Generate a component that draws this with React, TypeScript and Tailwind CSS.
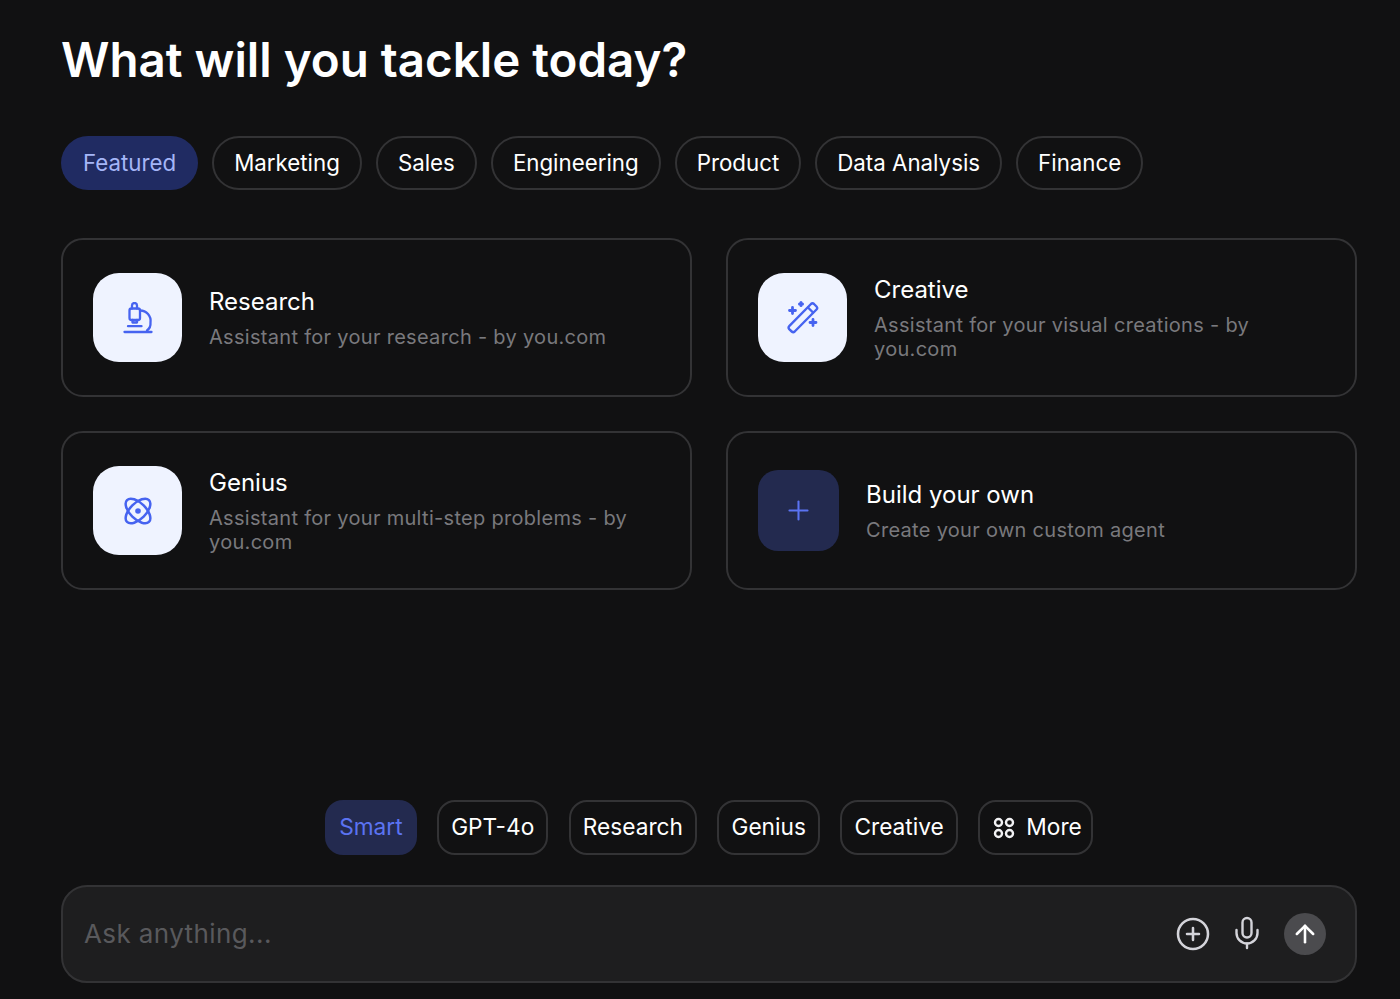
import { ArrowUp, CirclePlus, Mic, Plus } from 'lucide-react'
import type { ReactNode } from 'react'

const categories = ['Marketing', 'Sales', 'Engineering', 'Product', 'Data Analysis', 'Finance']
const models = ['GPT-4o', 'Research', 'Genius', 'Creative']

function MicroscopeIcon() {
  return (
    <svg width="30" height="32" viewBox="0 0 30 32" fill="none" stroke="#4663f0" strokeWidth="2.300" strokeLinecap="round" strokeLinejoin="round">
      <rect x="6.500" y="6.500" width="10.500" height="11.500" rx="2" />
      <path d="M9 6.500V3.500a2.400 2.400 0 0 1 5 0v3" />
      <path d="M9.500 18v2.500h4.500V18" />
      <path d="M17 8.500a10.500 10.500 0 0 1 10.500 12 9 9 0 0 1-3.500 8" />
      <path d="M5 24.200h13.500" />
      <path d="M1.500 30h27" />
    </svg>
  )
}

function WandIcon() {
  return (
    <svg width="34" height="34" viewBox="0 1.500 34 34" fill="none" stroke="#4663f0" strokeWidth="2.400" strokeLinecap="round" strokeLinejoin="round">
      <path d="M3.200 26.700 25 4.500a2.200 2.200 0 0 1 3 0l2.500 2.500a2.200 2.200 0 0 1 0 3L8.700 32a2.200 2.200 0 0 1-3 0l-2.500-2.400a2.200 2.200 0 0 1 0-2.900Z" />
      <path d="m22 8 5 5" />
      <path d="M6.500 8v6M3.500 11h6" strokeWidth="2.800" />
      <path d="M15 3v3M13.500 4.500h3" strokeWidth="3" />
      <path d="M27 20v6M24 23h6" strokeWidth="2.800" />
    </svg>
  )
}

function AtomIcon() {
  return (
    <svg width="30" height="30" viewBox="0 0 30 30" fill="none" stroke="#4663f0" strokeWidth="2.500">
      <ellipse cx="15" cy="15" rx="8" ry="15.500" transform="rotate(45 15 15)" />
      <ellipse cx="15" cy="15" rx="8" ry="15.500" transform="rotate(-45 15 15)" />
      <circle cx="15" cy="15" r="2.800" fill="#4663f0" stroke="none" />
    </svg>
  )
}

function GridDotsIcon() {
  return (
    <svg width="22" height="22" viewBox="0 0 22 22" fill="none" stroke="#f2f2f4" strokeWidth="2.400">
      <circle cx="5.500" cy="5.500" r="3.500" />
      <circle cx="16.500" cy="5.500" r="3.500" />
      <circle cx="5.500" cy="16.500" r="3.500" />
      <circle cx="16.500" cy="16.500" r="3.500" />
    </svg>
  )
}

function AgentCard({ icon, title, description }: { icon: ReactNode; title: string; description: string }) {
  return (
    <div className="flex h-[159px] items-center gap-[27px] rounded-[22px] border-2 border-[#333335] px-[30px]">
      <div className="flex h-[89px] w-[89px] shrink-0 items-center justify-center rounded-[26px] bg-[#eff3ff]">{icon}</div>
      <div className="min-w-0">
        <div className="text-[24px] leading-[30px] text-white">{title}</div>
        <div className="mt-[8px] text-[20px] leading-[24px] tracking-[0.3px] text-[#79797d]">{description}</div>
      </div>
    </div>
  )
}

export default function App() {
  return (
    <div className="flex h-[999px] w-[1400px] flex-col overflow-hidden bg-[#111112] pl-[61px] pr-[43px] font-['Inter',sans-serif]">
      <h1 className="mt-[30px] text-[47.500px] font-semibold leading-[60px] text-white">What will you tackle today?</h1>

      <div className="mt-[46px] flex gap-[14px]">
        <button className="h-[54px] rounded-full bg-[#202b62] px-[22px] text-[22.300px] text-[#a5b6f7]">Featured</button>
        {categories.map((name) => (
          <button key={name} className="h-[54px] rounded-full border-2 border-[#333335] px-[20px] text-[22.300px] text-white">
            {name}
          </button>
        ))}
      </div>

      <div className="mt-[48px] grid grid-cols-2 gap-x-[34px] gap-y-[34px]">
        <AgentCard icon={<MicroscopeIcon />} title="Research" description="Assistant for your research - by you.com" />
        <AgentCard icon={<WandIcon />} title="Creative" description="Assistant for your visual creations - by you.com" />
        <AgentCard icon={<AtomIcon />} title="Genius" description="Assistant for your multi-step problems - by you.com" />
        <div className="flex h-[159px] items-center gap-[27px] rounded-[22px] border-2 border-[#333335] px-[30px]">
          <div className="flex h-[81px] w-[81px] shrink-0 items-center justify-center rounded-[20px] bg-[#232a4f]">
            <Plus size={31} strokeWidth={1.600} color="#5b73f2" />
          </div>
          <div>
            <div className="text-[24px] leading-[30px] text-white">Build your own</div>
            <div className="mt-[8px] text-[20px] leading-[24px] tracking-[0.3px] text-[#79797d]">Create your own custom agent</div>
          </div>
        </div>
      </div>

      <div className="mt-[210px] flex justify-center gap-[20.500px]">
        <button className="h-[55px] rounded-[18px] bg-[#232a4f] px-[14px] text-[22.700px] text-[#5b73f2]">Smart</button>
        {models.map((name) => (
          <button key={name} className="h-[55px] rounded-[18px] border-2 border-[#333335] px-[12px] text-[22.700px] text-white">
            {name}
          </button>
        ))}
        <button className="flex h-[55px] items-center gap-[11px] rounded-[18px] border-2 border-[#333335] pl-[13px] pr-[9px] text-[22.700px] text-white">
          <GridDotsIcon />
          More
        </button>
      </div>

      <div className="mt-[30px] flex h-[98px] items-center rounded-[26px] border-2 border-[#333335] bg-[#1e1e1f] pl-[21px] pr-[29px]">
        <span className="flex-1 pb-[2px] text-[26px] tracking-[0.4px] text-[#59595c]">Ask anything...</span>
        <CirclePlus size={36} strokeWidth={1.700} color="#d4d4da" />
        <Mic size={36} strokeWidth={1.600} color="#d4d4da" className="ml-[18px] -translate-y-px" />
        <div className="ml-[19px] flex h-[42px] w-[42px] items-center justify-center rounded-full bg-[#4b4b4e]">
          <ArrowUp size={28} strokeWidth={2.200} color="#ffffff" />
        </div>
      </div>
    </div>
  )
}
